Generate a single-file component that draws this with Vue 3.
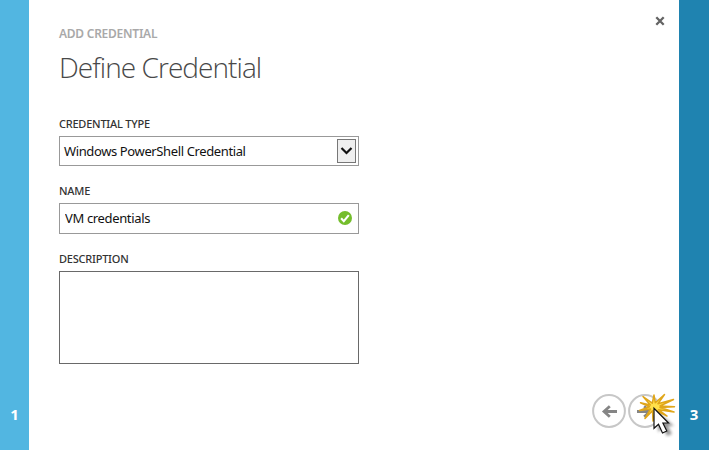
<script setup>
import { ref } from 'vue'
const name = ref('VM credentials')
const description = ref('')
</script>

<template>
  <main class="wizard">
    <aside class="step previous"><span>1</span></aside>
    <section class="panel">
      <header>
        <p class="eyebrow"><span>ADD CREDENTIAL</span></p>
        <h1>Define Credential</h1>
        <button class="close" aria-label="Close">
          <svg width="10" height="10" viewBox="0 0 10 10"><path d="M1.3 1.3 8.7 8.7M8.7 1.3 1.3 8.7" stroke="#636363" stroke-width="2.3" /></svg>
        </button>
      </header>
      <form @submit.prevent>
        <label class="type-label">CREDENTIAL TYPE</label>
        <div class="field select">
          <span class="type-value">Windows PowerShell Credential</span>
          <span class="drop"><svg width="13" height="9" viewBox="0 0 13 9"><path d="M1.5 1 6.5 6 11.5 1" fill="none" stroke="#111" stroke-width="2.2" /></svg></span>
        </div>
        <label class="name-label">NAME</label>
        <div class="field name">
          <input v-model="name" aria-label="Name" />
          <svg width="14" height="14" viewBox="0 0 14 14"><circle cx="7" cy="7" r="7" fill="#74bd2c" /><path d="m3.1 7.2 2.7 2.9 5-6" fill="none" stroke="#fff" stroke-width="2.1" /></svg>
        </div>
        <label class="description-label">DESCRIPTION</label>
        <textarea v-model="description" aria-label="Description"></textarea>
      </form>
      <nav>
        <button class="round" aria-label="Previous"><svg width="34" height="34" viewBox="0 0 34 34"><circle cx="17" cy="17" r="15.9" fill="#fff" stroke="#c7c7c7" stroke-width="2" /><path d="M25 17.5H12M17.8 12.2l-5.8 5.3 5.8 5.3" fill="none" stroke="#858585" stroke-width="2.8" /></svg></button>
        <button class="round" aria-label="Next"><svg width="34" height="34" viewBox="0 0 34 34"><circle cx="17" cy="17" r="15.9" fill="#fff" stroke="#c7c7c7" stroke-width="2" /><path d="M9 17.5h13M16.2 12.2l5.8 5.3-5.8 5.3" fill="none" stroke="#858585" stroke-width="2.8" /></svg></button>
        <svg class="pointer" width="44" height="50" viewBox="0 0 44 50">
          <defs><filter id="shadow" x="-50%" y="-50%" width="200%" height="200%"><feGaussianBlur stdDeviation="1.8" /></filter></defs>
          <path d="m22 24 0 20 5-4 4 8 5-2-4-8h6z" fill="#444" opacity=".55" filter="url(#shadow)" />
          <path d="M7 8.5 16.3 15.2 18 7l1.3 7.8L28.5 6.5 22 15.8 37.5 11.5 24 18 38.5 18.7 24 19.5 38 24 22.5 21.7 31 28 20 22.5 17 33 16.5 22.8 9 30.5 14.5 21 3.5 22.5 13.5 18.8 4.5 14.8 14.3 16.9z" fill="#ffe04a" stroke="#e0a61a" stroke-width="1.5" stroke-linejoin="round" />
          <path d="M18 20.3v20l4.5-4.1 4 8.8 4.3-2-3.9-8h5.6z" fill="#fff" stroke="#111" stroke-width="1.2" />
        </svg>
      </nav>
    </section>
    <aside class="step next"><span>3</span></aside>
  </main>
</template>

<style>
body { margin: 0; overflow: hidden; }
</style>
<style scoped>
* { box-sizing: border-box; }
.wizard { display: flex; width: 709px; height: 450px; background: #fff; font-family: "Noto Sans", "Open Sans", sans-serif; }
.step { display: flex; align-items: flex-end; justify-content: center; padding-bottom: 26px; color: #fff; font: 700 15px/20px "Open Sans", sans-serif; }
.previous { width: 29px; background: #52b6e1; }
.next { width: 30px; background: #1f83b0; }
.panel { position: relative; width: 650px; padding: 26px 30px 0; }
header { height: 90px; }
p, h1 { margin: 0; }
.eyebrow { color: #a9a9a9; font-size: 12px; line-height: 16px; font-weight: 600; letter-spacing: -.25px; }
h1 { margin: 6px 0 0; color: #484848; font: 300 28px/38px "Open Sans", sans-serif; letter-spacing: -.94px; white-space: nowrap; }
button { border: 0; padding: 0; background: transparent; }
.close { position: absolute; left: 626px; top: 16px; width: 10px; height: 10px; }
.close svg, .round svg, .field svg { display: block; }
form { display: flex; flex-direction: column; align-items: flex-start; }
label { height: 20px; color: #333; font-size: 11px; font-weight: 500; line-height: 15px; letter-spacing: -.23px; white-space: nowrap; }
.field { display: flex; align-items: center; justify-content: space-between; width: 300px; border: 1px solid #999; font-size: 13px; color: #111; }
.select { height: 30px; padding: 0 2px 0 4px; }
.type-value { letter-spacing: -.38px; }
.drop { display: flex; align-items: center; justify-content: center; width: 19px; height: 24px; border: 1px solid #777; background: #efefef; }
.name-label { margin-top: 17px; }
.name { height: 31px; padding: 0 6px 1px 5px; }
input { width: 250px; border: 0; outline: 0; padding: 0; color: #111; font: 13px/20px "Noto Sans", sans-serif; letter-spacing: -.35px; }
.description-label { margin-top: 17px; }
textarea { display: block; width: 300px; height: 93px; margin: 0; border: 1px solid #696969; outline: 0; resize: none; }
nav { position: absolute; left: 563px; top: 394px; display: flex; gap: 2px; }
.round { width: 34px; height: 34px; }
.pointer { position: absolute; left: 44px; top: -6px; pointer-events: none; }
</style>
